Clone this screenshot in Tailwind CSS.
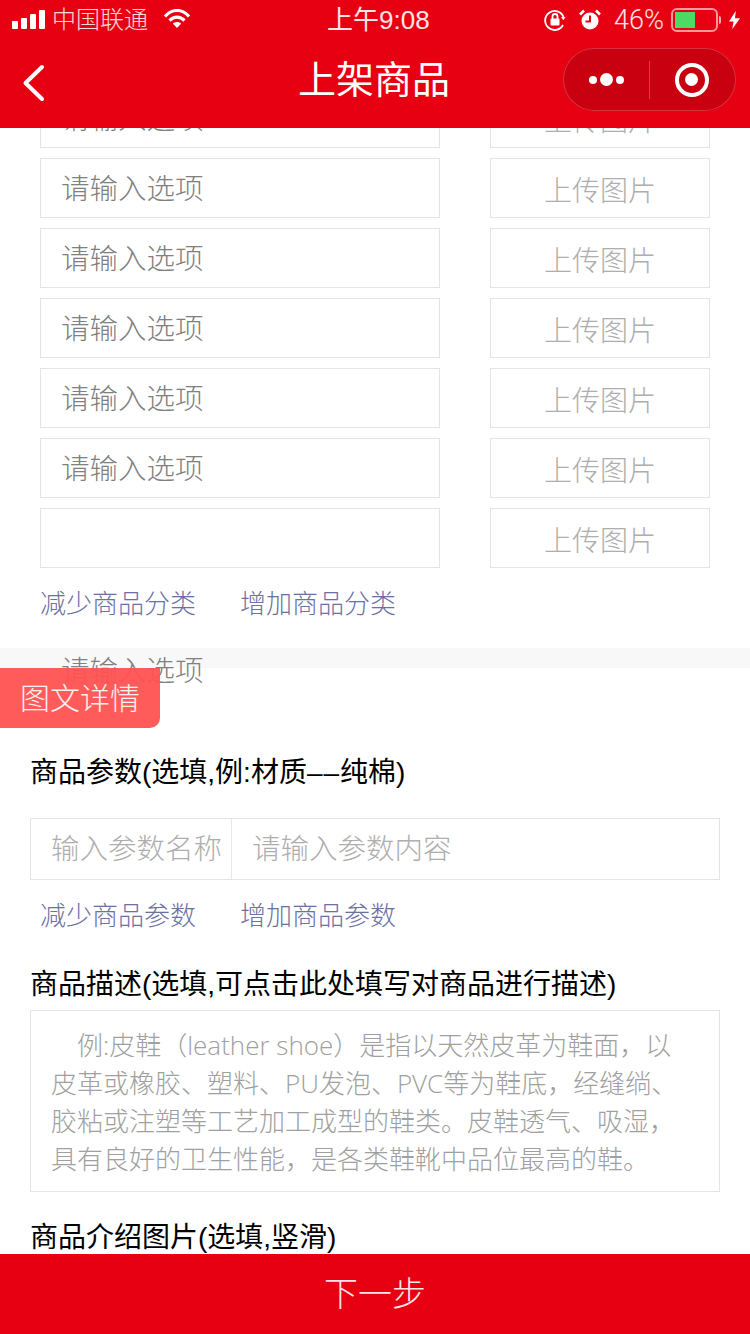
<!DOCTYPE html>
<html lang="zh-CN">
<head>
  <meta charset="UTF-8" />
  <meta name="viewport" content="width=device-width, initial-scale=1.0" />
  <title>上架商品</title>
  <script src="https://cdn.jsdelivr.net/npm/@tailwindcss/browser@4"></script>
</head>
<body class="bg-white font-['Liberation_Sans','Noto_Sans_CJK_SC',sans-serif] text-black">
  <div class="relative w-[750px] h-[1334px] overflow-hidden flex flex-col">

    <!-- status bar + nav -->
    <header class="relative z-10 h-[128px] shrink-0 bg-[#e60012] text-white">
      <div class="h-[40px] flex items-center justify-between pl-[12px] pr-[10px]">
        <div class="flex items-center w-[300px]">
          <div class="flex items-end gap-[3px] h-[19px] mt-[-1px]">
            <span class="w-[6px] h-[8px] rounded-[1px] bg-white"></span>
            <span class="w-[6px] h-[11px] rounded-[1px] bg-white"></span>
            <span class="w-[6px] h-[15px] rounded-[1px] bg-white"></span>
            <span class="w-[6px] h-[19px] rounded-[1px] bg-white"></span>
          </div>
          <span class="ml-[7px] text-[24px] leading-none font-light text-white/85">中国联通</span>
          <svg class="ml-[15px] mt-[-2px]" width="28" height="20" viewBox="0 0 28 20" fill="none" stroke="#fff" stroke-width="3.2">
            <path d="M2 7.500C9-.5 19-.5 26 7.500" />
            <path d="M6.500 11.500c4.500-4.500 10.500-4.500 15 0" />
            <path d="M14 19l-4.200-4.500c2.500-2 5.900-2 8.400 0z" fill="#fff" stroke="none" />
          </svg>
        </div>
        <span class="text-[26px] leading-none absolute left-[327px] text-white/90">上午9:08</span>
        <div class="flex items-center">
          <svg width="24" height="24" viewBox="0 0 24 24" fill="none" stroke="#fff" stroke-width="1.800">
            <path d="M20.500 9A9.500 9.500 0 1 0 20 17" />
            <path d="M18 9h4.500l-2.200 3.200z" fill="#fff" stroke="none" />
            <rect x="7.500" y="10.500" width="9" height="7" rx="1" fill="#fff" stroke="none" />
            <path d="M9.500 11V8.500a2.500 2.500 0 0 1 5 0V11" />
          </svg>
          <svg class="ml-[12px]" width="22" height="24" viewBox="0 0 22 24" fill="none">
            <circle cx="11" cy="13" r="8.500" fill="#fff" />
            <path d="M11 7.500V13.500H6.500" stroke="#e60012" stroke-width="2" />
            <path d="M1 6.500 5 2.500M21 6.500 17 2.500" stroke="#fff" stroke-width="2.500" />
          </svg>
          <span class="ml-[13px] text-[27px] leading-none font-['Roboto'] font-light text-white/90">46%</span>
          <div class="ml-[7px] w-[47px] h-[24px] rounded-[6px] border-2 border-white/60 p-[2px]">
            <div class="w-[20px] h-full bg-[#4cd964]"></div>
          </div>
          <span class="ml-[1px] w-[2px] h-[8px] rounded-r-[2px] bg-white/70"></span>
          <svg class="ml-[8px]" width="11" height="20" viewBox="0 0 12 20"><path d="M7.500 0 0 11.500h5L3.500 20 12 8H6.500z" fill="#fff" /></svg>
        </div>
      </div>
      <div class="relative h-[88px] flex items-center justify-center">
        <svg class="absolute left-[22px] top-[24px]" width="24" height="38" viewBox="0 0 24 38" fill="none" stroke="#fff" stroke-width="4" stroke-linecap="round" stroke-linejoin="round">
          <path d="M20 3 3.500 19 20 35" />
        </svg>
        <h1 class="text-[38px] leading-none font-normal mt-[-8px] ml-[-2px]">上架商品</h1>
        <div class="absolute left-[563px] top-[8px] w-[173px] h-[63px] rounded-full bg-[#c8000f] border border-white/20 flex items-center">
          <div class="w-[86px] flex items-center justify-center gap-[3px] ml-[-1px]">
            <span class="w-[8px] h-[8px] rounded-full bg-white"></span>
            <span class="w-[13px] h-[13px] rounded-full bg-white"></span>
            <span class="w-[8px] h-[8px] rounded-full bg-white"></span>
          </div>
          <span class="w-px h-[38px] bg-white/25"></span>
          <div class="flex-1 flex items-center justify-center ml-[-2px]">
            <span class="w-[34px] h-[34px] rounded-full border-[4px] border-white flex items-center justify-center">
              <span class="w-[13px] h-[13px] rounded-full bg-white"></span>
            </span>
          </div>
        </div>
      </div>
    </header>

    <main class="flex-1 min-h-0 overflow-hidden">
      <!-- options, first row is cut off by the nav bar -->
      <div class="mt-[-40px] px-[40px] flex flex-col gap-[10px]">
        <div class="flex justify-between">
          <div class="w-[400px] h-[60px] border border-[#e4e4e4] pl-[20px] pt-[2px] flex items-center text-[28.5px] text-[#808080] font-light">请输入选项</div>
          <div class="w-[220px] h-[60px] border border-[#e4e4e4] pt-[8px] flex items-center justify-center text-[28px] text-[#aeaeae] font-light">上传图片</div>
        </div>
        <div class="flex justify-between">
          <div class="w-[400px] h-[60px] border border-[#e4e4e4] pl-[20px] pt-[2px] flex items-center text-[28.5px] text-[#808080] font-light">请输入选项</div>
          <div class="w-[220px] h-[60px] border border-[#e4e4e4] pt-[8px] flex items-center justify-center text-[28px] text-[#aeaeae] font-light">上传图片</div>
        </div>
        <div class="flex justify-between">
          <div class="w-[400px] h-[60px] border border-[#e4e4e4] pl-[20px] pt-[2px] flex items-center text-[28.5px] text-[#808080] font-light">请输入选项</div>
          <div class="w-[220px] h-[60px] border border-[#e4e4e4] pt-[8px] flex items-center justify-center text-[28px] text-[#aeaeae] font-light">上传图片</div>
        </div>
        <div class="flex justify-between">
          <div class="w-[400px] h-[60px] border border-[#e4e4e4] pl-[20px] pt-[2px] flex items-center text-[28.5px] text-[#808080] font-light">请输入选项</div>
          <div class="w-[220px] h-[60px] border border-[#e4e4e4] pt-[8px] flex items-center justify-center text-[28px] text-[#aeaeae] font-light">上传图片</div>
        </div>
        <div class="flex justify-between">
          <div class="w-[400px] h-[60px] border border-[#e4e4e4] pl-[20px] pt-[2px] flex items-center text-[28.5px] text-[#808080] font-light">请输入选项</div>
          <div class="w-[220px] h-[60px] border border-[#e4e4e4] pt-[8px] flex items-center justify-center text-[28px] text-[#aeaeae] font-light">上传图片</div>
        </div>
        <div class="flex justify-between">
          <div class="w-[400px] h-[60px] border border-[#e4e4e4] pl-[20px] pt-[2px] flex items-center text-[28.5px] text-[#808080] font-light">请输入选项</div>
          <div class="w-[220px] h-[60px] border border-[#e4e4e4] pt-[8px] flex items-center justify-center text-[28px] text-[#aeaeae] font-light">上传图片</div>
        </div>
        <div class="flex justify-between">
          <div class="w-[400px] h-[60px] border border-[#e4e4e4]"></div>
          <div class="w-[220px] h-[60px] border border-[#e4e4e4] pt-[8px] flex items-center justify-center text-[28px] text-[#aeaeae] font-light">上传图片</div>
        </div>
      </div>

      <div class="px-[40px] h-[70px] pt-[2px] flex items-center gap-[44px] text-[26px] text-[#6c70a4] font-light">
        <span>减少商品分类</span>
        <span>增加商品分类</span>
      </div>

      <div class="mt-[10px] h-[20px] bg-[#f8f8f8]"></div>

      <section class="pt-[87px] px-[30px]">
        <h2 class="text-[28px] leading-[36px] font-normal">商品参数(选填,例:材质<span class="tracking-[1px]">––</span>纯棉)</h2>
        <div class="mt-[27px] h-[62px] border border-[#e4e4e4] flex text-[28.5px] text-[#aeaeae] font-light">
          <div class="w-[201px] pl-[20px] border-r border-[#e8e8e8] flex items-center whitespace-nowrap">输入参数名称</div>
          <div class="pl-[20px] flex items-center">请输入参数内容</div>
        </div>
        <div class="px-[10px] h-[70px] pt-[2px] flex items-center gap-[44px] text-[26px] text-[#6c70a4] font-light">
          <span>减少商品参数</span>
          <span>增加商品参数</span>
        </div>
        <h2 class="mt-[17px] text-[28px] leading-[36px] font-normal">商品描述(选填,可点击此处填写对商品进行描述)</h2>
        <div class="mt-[7px] h-[182px] border border-[#e4e4e4] pl-[20px] pr-[24px] pt-[15px] text-[26px] leading-[38px] text-[#a0a0a0] font-['Open_Sans','Noto_Sans_CJK_SC',sans-serif] font-light">
          <p class="indent-[26px]">例:皮鞋（leather shoe）是指以天然皮革为鞋面，以皮革或橡胶、塑料、PU发泡、PVC等为鞋底，经缝绱、胶粘或注塑等工艺加工成型的鞋类。皮鞋透气、吸湿，具有良好的卫生性能，是各类鞋靴中品位最高的鞋。</p>
        </div>
        <h2 class="mt-[28px] text-[28px] leading-[36px] font-normal">商品介绍图片(选填,竖滑)</h2>
      </section>
    </main>

    <!-- placeholder showing through, and the floating tab -->
    <span class="absolute left-[61px] top-[651px] text-[28.5px] leading-[40px] text-[#808080] font-light">请输入选项</span>
    <div class="absolute left-0 top-[668px] w-[160px] h-[60px] bg-[#ff5252]/95 rounded-br-[10px] flex items-center justify-center text-[30px] text-white/90 font-light">图文详情</div>

    <footer class="relative z-10 h-[80px] shrink-0 bg-[#e60012] flex items-center justify-center text-[34px] text-white/90 font-light">下一步</footer>
  </div>
</body>
</html>
